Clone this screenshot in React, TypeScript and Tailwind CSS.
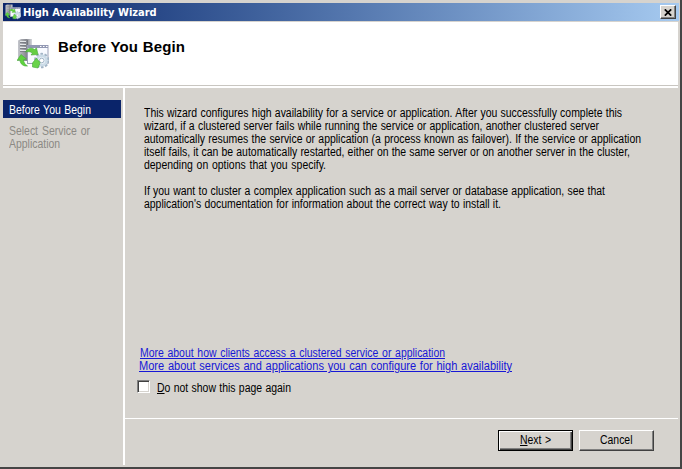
import type { ReactNode } from "react";

function ClusterIcon({ className }: { className: string }) {
  return (
    <svg className={className} viewBox="0 0 32 32">
      <defs>
        <linearGradient id="tower" x1="0" x2="1" y1="0" y2="0">
          <stop offset="0" stopColor="#c4c6cc" />
          <stop offset=".6" stopColor="#85878f" />
          <stop offset="1" stopColor="#d5d7dc" />
        </linearGradient>
      </defs>
      <path d="M1 2.500 4 1h11v22H1z" fill="url(#tower)" />
      <path d="M3 3.500h6M3 6.500h6M3 9.500h6M3 12.500h6" stroke="#e5e7eb" />
      <path d="M3 4.500h6M3 7.500h6M3 10.500h6M3 13.500h6" stroke="#73767f" strokeWidth=".8" />
      <path d="M10.500 2v20" stroke="#73767f" />
      <rect x="10.500" y="7.500" width="20.500" height="18" fill="#f8faff" stroke="#9da2b8" />
      <rect x="10.500" y="7" width="20.500" height="3" fill="#9298b3" />
      <path d="M23 8.500h1.500M26 8.500h1.500M29 8.500h1.500" stroke="#fff" />
      <circle cx="24.700" cy="22.500" r="6.500" fill="#eaf1f7" stroke="#a3b5c6" strokeWidth="2.500" strokeDasharray="2.500 1.584" />
      <circle cx="24.700" cy="22.500" r="4.800" fill="none" stroke="#cbdbe7" strokeWidth="2.500" />
      <circle cx="24.700" cy="22.500" r="2.300" fill="#fff" stroke="#8fa5ba" strokeWidth=".8" />
      <path d="M8.500 14c2-4 6-5 9-2.500l2-1.500 1.500 6.500-7 .5 1.500-2c-2-1.500-4.500-1.500-7-1z" fill="#65ce43" stroke="#43a936" strokeWidth=".6" />
      <path d="M0 22.500 4 16.500l5.500 4.500-3 .8c.3 2.800 1.500 4.700 4 6.200-4 .5-7.500-2-7.500-6z" fill="#5fd23f" stroke="#43a936" strokeWidth=".6" />
      <path d="m15.500 25 4-5 1.500 2.500c2 .5 2.500 3 1 5l-1 2.500-5.500-1z" fill="#69d34a" stroke="#43a936" strokeWidth=".6" />
    </svg>
  );
}

const CONDENSED = "w-[114.943%] scale-x-[.87]";
const SEMI_CONDENSED = "w-[108.696%] scale-x-[.92]";
const REGULAR = "w-full";

function Line({ width, fit = CONDENSED, children }: { width: string; fit?: string; children: ReactNode }) {
  return (
    <span className={`block h-[13px] ${width}`}>
      <span className={`block origin-left whitespace-nowrap [text-align-last:justify] ${fit}`}>{children}</span>
    </span>
  );
}

export default function App() {
  return (
    <div className="flex h-[469px] w-[682px] flex-col border-r-2 border-b-2 border-[#454545] bg-[#d6d3ce] pt-[3px] pr-px pl-[3px] font-['Liberation_Sans',Arial,sans-serif] text-[12px] leading-[13px] text-black">
      <header className="flex h-[18px] shrink-0 items-center bg-linear-to-r from-[#0a246a] to-[#a6caf0] pr-[3px] pl-[2px]">
        <ClusterIcon className="size-4 shrink-0" />
        <h1 className="ml-[2px] font-['DejaVu_Sans_Condensed','DejaVu_Sans',sans-serif] text-[11px] font-bold text-white">
          <Line width="w-[133px]" fit={REGULAR}>High Availability Wizard</Line>
        </h1>
        <button className="ml-auto flex h-[14px] w-4 items-center justify-center border border-t-white border-r-[#404040] border-b-[#404040] border-l-white bg-[#d6d3ce] shadow-[inset_-1px_-1px_#808080]">
          <svg className="h-[7px] w-2" viewBox="0 0 8 7">
            <path d="m.8.3 6.400 6.400M7.200.3.8 6.700" stroke="#000" strokeWidth="1.700" />
          </svg>
        </button>
      </header>
      <section className="mt-px flex h-[63px] w-[675px] shrink-0 bg-white pt-[16px] pl-[14px]">
        <ClusterIcon className="size-8 shrink-0" />
        <h2 className="ml-[9px] w-[127px] whitespace-nowrap text-[15px] leading-[18px] font-bold tracking-[.1px] [text-align-last:justify]">
          Before You Begin
        </h2>
      </section>
      <div className="h-[3px] w-[675px] shrink-0 border-t border-b-2 border-t-[#c9c6c1] border-b-white" />
      <div className="flex min-h-0 flex-1">
        <nav className="w-[120px] shrink-0 pt-[12px]">
          <div className="h-[18px] w-[118px] bg-[#0a246a] pt-[4px] pl-[6px] text-white">
            <Line width="w-[82px]">Before You Begin</Line>
          </div>
          <div className="pt-[7px] pl-[6px] text-[#8b8984]">
            <Line width="w-[81px]">Select Service or</Line>
            <Line width="w-[52px]">Application</Line>
          </div>
        </nav>
        <div className="mb-[2px] w-[2px] shrink-0 bg-white" />
        <div className="flex min-w-0 flex-1 flex-col">
          <main className="flex h-[330px] shrink-0 flex-col pt-[19px] pl-[19px]">
            <p>
              <Line width="w-[478px]">This wizard configures high availability for a service or application. After you successfully complete this</Line>
              <Line width="w-[455px]">wizard, if a clustered server fails while running the service or application, another clustered server</Line>
              <Line width="w-[497px]">automatically resumes the service or application (a process known as failover). If the service or application</Line>
              <Line width="w-[486px]">itself fails, it can be automatically restarted, either on the same server or on another server in the cluster,</Line>
              <Line width="w-[182px]">depending on options that you specify.</Line>
            </p>
            <p className="mt-[13px]">
              <Line width="w-[461px]">If you want to cluster a complex application such as a mail server or database application, see that</Line>
              <Line width="w-[357px]">application's documentation for information about the correct way to install it.</Line>
            </p>
            <div className="mt-[136px] -ml-[5px] text-[#1717d6]">
              <a className="ml-px block w-fit underline underline-offset-1">
                <Line width="w-[305px]">More about how clients access a clustered service or application</Line>
              </a>
              <a className="block w-fit underline underline-offset-1">
                <Line width="w-[373px]" fit={SEMI_CONDENSED}>More about services and applications you can configure for high availability</Line>
              </a>
            </div>
            <label className="mt-[7px] -ml-[7px] flex h-[16px] items-start">
              <span className="size-[13px] border border-t-[#808080] border-r-white border-b-white border-l-[#808080] bg-white shadow-[inset_1px_1px_#404040,inset_-1px_-1px_#d6d3ce]" />
              <span className="ml-[7px] pt-[2px]">
                <Line width="w-[134px]"><u>D</u>o not show this page again</Line>
              </span>
            </label>
          </main>
          <footer className="mr-px flex items-start justify-end gap-[6px] border-t border-white pt-[11px] pr-[24px]">
            <button className="flex h-[21px] w-[75px] items-center justify-center border border-black shadow-[inset_1px_1px_#fff,inset_-1px_-1px_#404040,inset_-2px_-2px_#808080]">
              <Line width="w-[31px]"><u>N</u>ext &gt;</Line>
            </button>
            <button className="flex h-[21px] w-[75px] items-center justify-center border border-t-white border-r-[#404040] border-b-[#404040] border-l-white shadow-[inset_-1px_-1px_#808080]">
              <Line width="w-[33px]">Cancel</Line>
            </button>
          </footer>
        </div>
      </div>
    </div>
  );
}
